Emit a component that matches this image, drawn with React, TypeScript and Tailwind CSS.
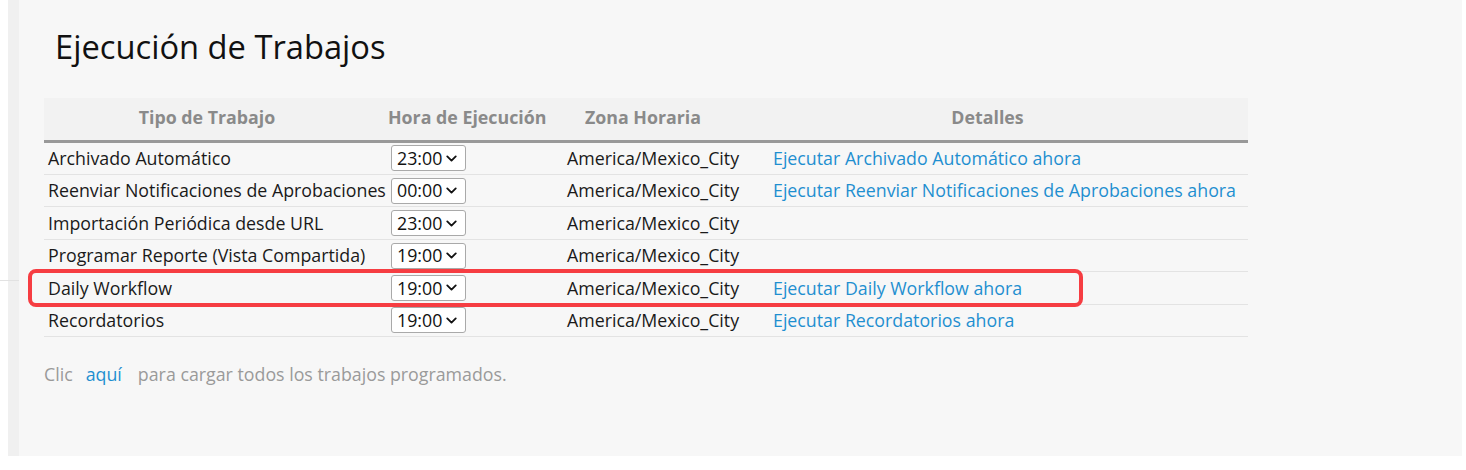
import { ChevronDown } from 'lucide-react';

const jobs = [
  { name: 'Archivado Automático', time: '23:00', link: 'Ejecutar Archivado Automático ahora' },
  { name: 'Reenviar Notificaciones de Aprobaciones', time: '00:00', link: 'Ejecutar Reenviar Notificaciones de Aprobaciones ahora' },
  { name: 'Importación Periódica desde URL', time: '23:00', link: '' },
  { name: 'Programar Reporte (Vista Compartida)', time: '19:00', link: '' },
  { name: 'Daily Workflow', time: '19:00', link: 'Ejecutar Daily Workflow ahora', marked: true },
  { name: 'Recordatorios', time: '19:00', link: 'Ejecutar Recordatorios ahora' },
];

function TimeSelect({ value }: { value: string }) {
  return (
    <div className="flex items-center h-[26px] w-[75px] border border-[#a9a9a9] rounded-[3px] bg-white pl-[5px] pr-[3px] gap-[1px] text-[#111]">
      <span>{value}</span>
      <ChevronDown size={17} strokeWidth={2.6} />
    </div>
  );
}

export default function App() {
  return (
    <div className="w-[1466px] h-[470px] bg-white" style={{ fontFamily: '"Open Sans", "Noto Sans", sans-serif' }}>
      <div className="flex h-[456px] w-[1462px]">
        {/* left rail */}
        <div className="w-[19px] flex flex-col">
          <div className="h-[281px] flex border-b border-[#e2e2e2]">
            <div className="w-[8px] bg-white" />
            <div className="flex-1 bg-[#f0f0f0]" />
          </div>
          <div className="flex-1 flex">
            <div className="w-[8px] bg-white" />
            <div className="flex-1 bg-[#f0f0f0]" />
          </div>
        </div>

        <div className="flex-1 bg-[#f7f7f7] pl-[25px]">
          <h1 className="text-[32.7px] leading-none text-[#111] pl-[11px] pt-[31px]">Ejecución de Trabajos</h1>

          <div className="mt-[34px] w-[1204px] text-[17.8px]">
            <div className="flex h-[45px] items-center bg-[#f2f2f2] border-b-[3px] border-[#999] font-bold text-[#8a8a8a] pb-[2px]">
              <div className="w-[344px] text-center pr-[18px]">Tipo de Trabajo</div>
              <div className="w-[175px] pl-0">Hora de Ejecución</div>
              <div className="w-[206px] text-center pr-[46px]">Zona Horaria</div>
              <div className="flex-1 text-center pr-[42px]">Detalles</div>
            </div>
            {jobs.map((j) => (
              <div key={j.name} className="relative flex h-[32.4px] items-center border-b border-[#e3e3e3] text-[#1a1a1a]">
                {j.marked && (
                  <div className="absolute left-[-16px] top-[-3px] w-[1055px] h-[38px] border-[4px] border-[#f63d42] rounded-[8px]" />
                )}
                <div className="w-[344px] pl-[4px] whitespace-nowrap">{j.name}</div>
                <div className="w-[175px] pl-[3px]"><TimeSelect value={j.time} /></div>
                <div className="w-[206px] pl-[4px]">America/Mexico_City</div>
                <div className="flex-1 pl-[4px] text-[#1f8fd0]">{j.link}</div>
              </div>
            ))}
          </div>

          <div className="mt-[24px] flex text-[17.8px] text-[#9a9a9a]">
            <span>Clic</span>
            <span className="ml-[13px] text-[#1f8fd0]">aquí</span>
            <span className="ml-[16px]">para cargar todos los trabajos programados.</span>
          </div>
        </div>
      </div>
    </div>
  );
}
